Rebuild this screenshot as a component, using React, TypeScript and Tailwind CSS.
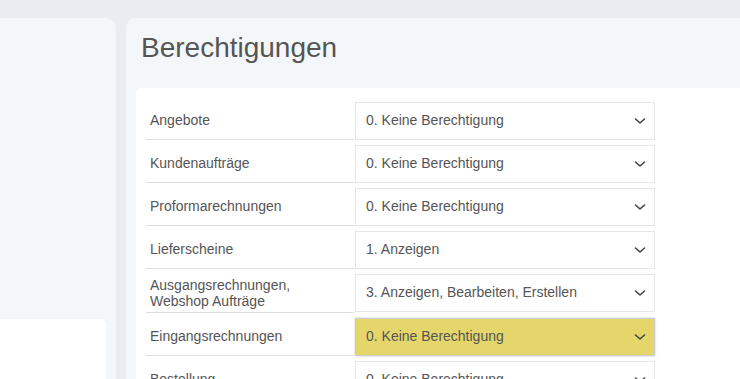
import React from 'react';

interface PermissionRow {
    label: string;
    value: string;
    highlighted?: boolean;
}

const rows: PermissionRow[] = [
    { label: 'Angebote', value: '0. Keine Berechtigung' },
    { label: 'Kundenaufträge', value: '0. Keine Berechtigung' },
    { label: 'Proformarechnungen', value: '0. Keine Berechtigung' },
    { label: 'Lieferscheine', value: '1. Anzeigen' },
    { label: 'Ausgangsrechnungen, Webshop Aufträge', value: '3. Anzeigen, Bearbeiten, Erstellen' },
    { label: 'Eingangsrechnungen', value: '0. Keine Berechtigung', highlighted: true },
    { label: 'Bestellung', value: '0. Keine Berechtigung' },
];

function Chevron() {
    return (
        <svg width="12" height="8" viewBox="0 0 12 8" fill="none" className="mr-[8px] shrink-0">
            <path d="M1.5 2 L6 6 L10.5 2" stroke="#444" strokeWidth="1.6" strokeLinecap="round" strokeLinejoin="round" />
        </svg>
    );
}

export default function App() {
    return (
        <div
            className="h-[379px] w-[740px] overflow-hidden bg-[#e9edf1] pt-[18px]"
            style={{ fontFamily: '"Liberation Sans", Arial, sans-serif' }}
        >
            <div className="flex gap-[10px]">
                {/* left panel */}
                <div className="h-[400px] w-[116px] shrink-0 rounded-r-[10px] bg-[#f4f7f9] pr-[10px] pt-[301px]">
                    <div className="h-[100px] rounded-r-[5px] bg-white" />
                </div>

                {/* permissions panel */}
                <div className="h-[400px] w-[640px] shrink-0 rounded-tl-[10px] bg-[#f4f7f9] pl-[10px] pt-[15px]">
                    <h1 className="pl-[5px] text-[28px] leading-[1.1] font-normal text-[#555]">
                        Berechtigungen
                    </h1>
                    <div className="mt-[24px] h-[320px] rounded-tl-[5px] bg-white pl-[10px] pt-[9px]">
                        {rows.map((row) => (
                            <div key={row.label} className="flex items-start">
                                <div className="flex min-h-[43px] w-[208px] shrink-0 items-center border-b border-[#dddddd] pb-[3px] pl-[4px] pt-[8px] text-[14px] leading-[16px] text-[#555]">
                                    {row.label === 'Ausgangsrechnungen, Webshop Aufträge' ? (
                                        <span>
                                            Ausgangsrechnungen,
                                            <br />
                                            Webshop Aufträge
                                        </span>
                                    ) : (
                                        row.label
                                    )}
                                </div>
                                <div
                                    className={
                                        row.highlighted
                                            ? 'ml-[1px] mt-[5px] flex h-[38px] w-[300px] items-center justify-between border border-[#cccccc] bg-[#e4d66a] pl-[10px] text-[14px] text-[#555] shadow-[0_0_2px_rgba(0,0,0,0.25)]'
                                            : 'ml-[1px] mt-[5px] flex h-[38px] w-[300px] items-center justify-between border border-[#e6e6e6] bg-white pl-[10px] text-[14px] text-[#555]'
                                    }
                                >
                                    <span>{row.value}</span>
                                    <Chevron />
                                </div>
                            </div>
                        ))}
                    </div>
                </div>
            </div>
        </div>
    );
}
